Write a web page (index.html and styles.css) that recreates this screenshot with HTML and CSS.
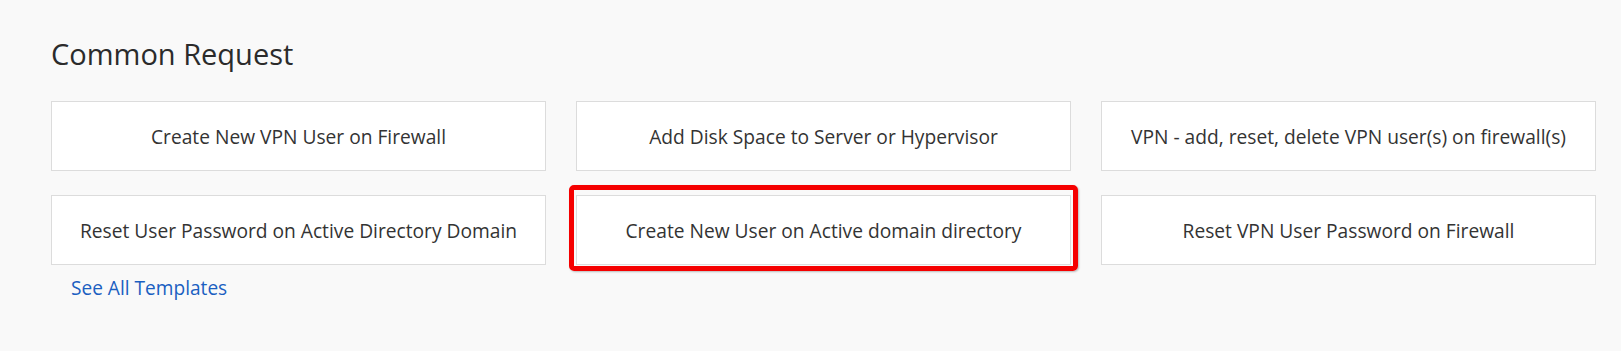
FILE: index.html
```html
<!DOCTYPE html>
<html lang="en">
<head>
  <meta charset="UTF-8" />
  <title>Common Request</title>
  <link rel="stylesheet" href="styles.css">
</head>
<body>

<section class="common">
  <h2>Common Request</h2>

  <div class="grid">
    <a class="card" href="#">Create New VPN User on Firewall</a>
    <a class="card" href="#">Add Disk Space to Server or Hypervisor</a>
    <a class="card" href="#">VPN - add, reset, delete VPN user(s) on firewall(s)</a>
    <a class="card" href="#">Reset User Password on Active Directory Domain</a>
    <a class="card marked" href="#">Create New User on Active domain directory</a>
    <a class="card" href="#">Reset VPN User Password on Firewall</a>
  </div>

  <a class="see-all" href="#">See All Templates</a>
</section>

</body>
</html>
```

FILE: styles.css
```css
* { margin: 0; padding: 0; box-sizing: border-box; }

body {
  font-family: 'Open Sans', 'Noto Sans', sans-serif;
  background: #f9f9f9;
  color: #333;
}

.common {
  width: 1596px;
  padding: 34px 0 0 51px;
}

.common h2 {
  font-size: 29px;
  font-weight: 400;
  line-height: 40px;
  color: #2b2b2b;
  margin-bottom: 27px;
}

.grid {
  display: grid;
  grid-template-columns: repeat(3, 1fr);
  column-gap: 30px;
  row-gap: 24px;
}

.card {
  position: relative;
  display: flex;
  align-items: center;
  justify-content: center;
  height: 70px;
  background: #fff;
  border: 1px solid #dcdcdc;
  color: #333;
  font-size: 19.2px;
  text-decoration: none;
}

/* red annotation box drawn over the card */
.card.marked::after {
  content: "";
  position: absolute;
  top: -11px;
  left: -8px;
  right: -8px;
  bottom: -7px;
  border: 5px solid #f50000;
  border-radius: 5px;
  box-shadow: 1px 1px 2px rgba(0,0,0,0.25);
}

.see-all {
  display: inline-block;
  margin: 10px 0 0 20px;
  font-size: 19.1px;
  color: #1b5fc1;
  text-decoration: none;
}
```
